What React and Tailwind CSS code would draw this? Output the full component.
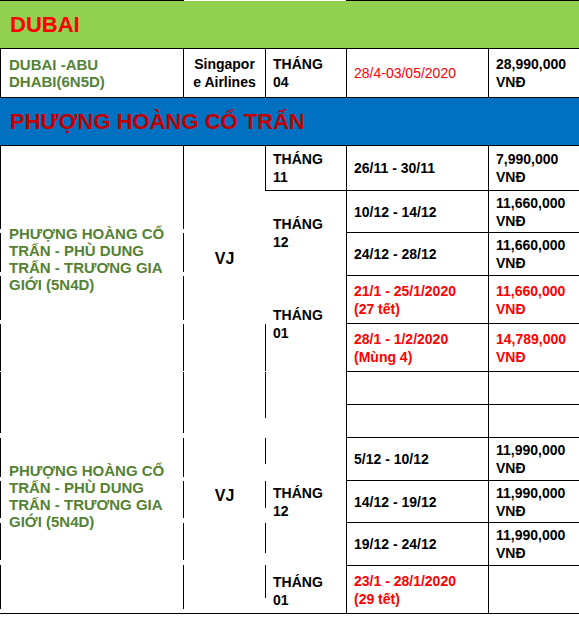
import React from "react";

const FONT = "font-['Liberation_Sans',Arial,sans-serif]";
const CELL = "flex items-center px-[7px] text-[14px] leading-[18px] font-bold";
const BLK = "text-black";
const RED = "text-[#ff0000]";
const GREEN = "text-[#548235] text-[15px] leading-[17px] font-bold";

export default function App() {
  return (
    <div className={`w-[579px] h-[628px] bg-white overflow-hidden text-black ${FONT}`}>
      <div className="grid grid-cols-[1px_182px_1px_81px_1px_80px_1px_141px_1px_90px] grid-rows-[1px_47px_1px_48px_1px_47px_1px_44px_1px_41px_1px_42px_1px_47px_1px_47px_1px_32px_1px_32px_1px_42px_1px_41px_1px_42px_1px_47px_1px]">
        {/* top rule */}
        <div className="row-start-1 col-start-1 col-span-3 bg-black" />
        <div className="row-start-1 col-start-7 col-span-4 bg-black" />

        {/* DUBAI header */}
        <div className="row-start-2 col-start-1 col-span-10 bg-[#92d050] flex items-center pl-[10px]">
          <span className="text-[22px] font-bold text-[#ff0000]">DUBAI</span>
        </div>
        <div className="row-start-3 col-start-1 col-span-10 bg-black" />

        {/* DUBAI row */}
        <div className="row-start-4 col-start-1 bg-black" />
        <div className={`row-start-4 col-start-2 ${CELL} pl-[8px]`}>
          <span className={GREEN}>DUBAI -ABU<br />DHABI(6N5D)</span>
        </div>
        <div className="row-start-4 col-start-3 bg-black" />
        <div className={`row-start-4 col-start-4 ${CELL} ${BLK} justify-center text-center`}>
          <span>Singapor<br />e Airlines</span>
        </div>
        <div className="row-start-4 col-start-5 bg-black" />
        <div className={`row-start-4 col-start-6 ${CELL} ${BLK}`}>
          <span>THÁNG<br />04</span>
        </div>
        <div className="row-start-4 col-start-7 bg-black" />
        <div className={`row-start-4 col-start-8 ${CELL}`}>
          <span className="text-[#ff0000] font-normal">28/4-03/05/2020</span>
        </div>
        <div className="row-start-4 col-start-9 bg-black" />
        <div className={`row-start-4 col-start-10 ${CELL} ${BLK}`}>
          <span>28,990,000<br />VNĐ</span>
        </div>
        <div className="row-start-5 col-start-1 col-span-10 bg-black" />

        {/* Phuong Hoang header */}
        <div className="row-start-6 col-start-1 col-span-10 bg-[#0070c0] flex items-center pl-[10px]">
          <span className="text-[22px] font-bold text-[#c00000]">PHƯỢNG HOÀNG CỔ TRẤN</span>
        </div>
        <div className="row-start-7 col-start-1 col-span-10 bg-black" />

        {/* vertical rules col 1 */}
        <div className="col-start-1 row-start-8 row-span-3 mb-[3px] bg-black" />
        <div className="col-start-1 row-start-12 mb-[3px] bg-black" />
        <div className="col-start-1 row-start-14 mb-[3px] bg-black" />
        <div className="col-start-1 row-start-16 bg-black" />
        <div className="col-start-1 row-start-18 row-span-3 mb-[4px] bg-black" />
        <div className="col-start-1 row-start-22 mb-[3px] bg-black" />
        <div className="col-start-1 row-start-24 mb-[4px] bg-black" />
        <div className="col-start-1 row-start-26 mb-[5px] bg-black" />
        <div className="col-start-1 row-start-27 row-span-2 mb-[4px] bg-black" />

        {/* vertical rules col 3 */}
        <div className="col-start-3 row-start-8 row-span-3 mb-[3px] bg-black" />
        <div className="col-start-3 row-start-12 mb-[3px] bg-black" />
        <div className="col-start-3 row-start-14 mb-[3px] bg-black" />
        <div className="col-start-3 row-start-16 bg-black" />
        <div className="col-start-3 row-start-18 row-span-3 mb-[4px] bg-black" />
        <div className="col-start-3 row-start-22 mb-[3px] bg-black" />
        <div className="col-start-3 row-start-24 mb-[4px] bg-black" />
        <div className="col-start-3 row-start-26 mb-[5px] bg-black" />
        <div className="col-start-3 row-start-27 row-span-2 mb-[4px] bg-black" />

        {/* vertical rules col 5 */}
        <div className="col-start-5 row-start-8 bg-black" />
        <div className="col-start-5 row-start-16 bg-black" />
        <div className="col-start-5 row-start-18 row-span-3 mb-[19px] bg-black" />
        <div className="col-start-5 row-start-22 mb-[16px] bg-black" />
        <div className="col-start-5 row-start-24 mb-[14px] bg-black" />
        <div className="col-start-5 row-start-26 mb-[12px] bg-black" />
        <div className="col-start-5 row-start-27 row-span-2 mb-[15px] bg-black" />

        {/* vertical rules col 7 & 9 */}
        <div className="col-start-7 row-start-8 row-span-21 bg-black" />
        <div className="col-start-9 row-start-8 row-span-21 bg-black" />

        {/* horizontal rules in body */}
        <div className="row-start-9 col-start-5 col-span-6 bg-black" />
        <div className="row-start-11 col-start-7 col-span-4 bg-black" />
        <div className="row-start-13 col-start-7 col-span-4 bg-black" />
        <div className="row-start-15 col-start-7 col-span-4 bg-black" />
        <div className="row-start-17 col-start-7 col-span-4 bg-black" />
        <div className="row-start-19 col-start-7 col-span-4 bg-black" />
        <div className="row-start-21 col-start-7 col-span-4 bg-black" />
        <div className="row-start-23 col-start-7 col-span-4 bg-black" />
        <div className="row-start-25 col-start-7 col-span-4 bg-black" />
        <div className="row-start-27 col-start-7 col-span-4 bg-black" />
        <div className="row-start-29 col-start-1 col-span-10 bg-black" />

        {/* tour name blocks */}
        <div className={`col-start-2 row-start-8 row-span-9 ${CELL} pl-[8px]`}>
          <span className={GREEN}>PHƯỢNG HOÀNG CỔ<br />TRẤN - PHÙ DUNG<br />TRẤN - TRƯƠNG GIA<br />GIỚI (5N4D)</span>
        </div>
        <div className={`col-start-2 row-start-22 row-span-5 ${CELL} pl-[8px] pb-[12px]`}>
          <span className={GREEN}>PHƯỢNG HOÀNG CỔ<br />TRẤN - PHÙ DUNG<br />TRẤN - TRƯƠNG GIA<br />GIỚI (5N4D)</span>
        </div>

        {/* airline */}
        <div className={`col-start-4 row-start-8 row-span-9 ${CELL} ${BLK} justify-center`}>
          <span className="text-[16px]">VJ</span>
        </div>
        <div className={`col-start-4 row-start-22 row-span-5 ${CELL} ${BLK} justify-center pb-[12px]`}>
          <span className="text-[16px]">VJ</span>
        </div>

        {/* months */}
        <div className={`col-start-6 row-start-8 ${CELL} ${BLK}`}><span>THÁNG<br />11</span></div>
        <div className={`col-start-6 row-start-10 row-span-3 ${CELL} ${BLK}`}><span>THÁNG<br />12</span></div>
        <div className={`col-start-6 row-start-14 row-span-3 ${CELL} ${BLK}`}><span>THÁNG<br />01</span></div>
        <div className={`col-start-6 row-start-22 row-span-5 ${CELL} ${BLK}`}><span>THÁNG<br />12</span></div>
        <div className={`col-start-6 row-start-28 ${CELL} ${BLK} pt-[2px]`}><span>THÁNG<br />01</span></div>

        {/* dates & prices */}
        <div className={`col-start-8 row-start-8 ${CELL} ${BLK}`}><span>26/11 - 30/11</span></div>
        <div className={`col-start-10 row-start-8 ${CELL} ${BLK}`}><span>7,990,000<br />VNĐ</span></div>

        <div className={`col-start-8 row-start-10 ${CELL} ${BLK}`}><span>10/12 - 14/12</span></div>
        <div className={`col-start-10 row-start-10 ${CELL} ${BLK}`}><span>11,660,000<br />VNĐ</span></div>

        <div className={`col-start-8 row-start-12 ${CELL} ${BLK}`}><span>24/12 - 28/12</span></div>
        <div className={`col-start-10 row-start-12 ${CELL} ${BLK}`}><span>11,660,000<br />VNĐ</span></div>

        <div className={`col-start-8 row-start-14 ${CELL} ${RED}`}><span>21/1 - 25/1/2020<br />(27 tết)</span></div>
        <div className={`col-start-10 row-start-14 ${CELL} ${RED}`}><span>11,660,000<br />VNĐ</span></div>

        <div className={`col-start-8 row-start-16 ${CELL} ${RED}`}><span>28/1 - 1/2/2020<br />(Mùng 4)</span></div>
        <div className={`col-start-10 row-start-16 ${CELL} ${RED}`}><span>14,789,000<br />VNĐ</span></div>

        <div className={`col-start-8 row-start-22 ${CELL} ${BLK}`}><span>5/12 - 10/12</span></div>
        <div className={`col-start-10 row-start-22 ${CELL} ${BLK}`}><span>11,990,000<br />VNĐ</span></div>

        <div className={`col-start-8 row-start-24 ${CELL} ${BLK}`}><span>14/12 - 19/12</span></div>
        <div className={`col-start-10 row-start-24 ${CELL} ${BLK}`}><span>11,990,000<br />VNĐ</span></div>

        <div className={`col-start-8 row-start-26 ${CELL} ${BLK}`}><span>19/12 - 24/12</span></div>
        <div className={`col-start-10 row-start-26 ${CELL} ${BLK}`}><span>11,990,000<br />VNĐ</span></div>

        <div className={`col-start-8 row-start-28 ${CELL} ${RED}`}><span>23/1 - 28/1/2020<br />(29 tết)</span></div>
      </div>
    </div>
  );
}
